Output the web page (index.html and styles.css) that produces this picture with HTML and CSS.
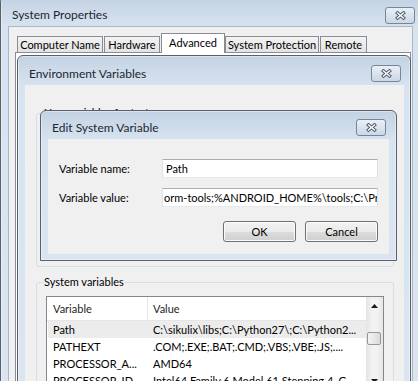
FILE: index.html
```html
<!DOCTYPE html>
<html>
<head>
<meta charset="utf-8">
<link rel="stylesheet" href="styles.css">
</head>
<body>
<div class="desk">
  <div class="win sys">
    <div class="titlebar">
      <span class="title">System Properties</span>
      <span class="close"><svg width="11" height="9" viewBox="0 0 11 9"><path d="M2.5 2 L8.5 7 M8.5 2 L2.5 7" stroke="#4f5b69" stroke-width="3.4" stroke-linecap="square" fill="none"/><path d="M2.5 2 L8.5 7 M8.5 2 L2.5 7" stroke="#ffffff" stroke-width="1.5" stroke-linecap="square" fill="none"/></svg></span>
    </div>
    <div class="client sys-client">
      <div class="tabs">
        <div class="tab tab-cn">Computer Name</div>
        <div class="tab tab-hw">Hardware</div>
        <div class="tab tab-adv active">Advanced</div>
        <div class="tab tab-sp">System Protection</div>
        <div class="tab tab-rm">Remote</div>
      </div>
      <div class="tabpanel"></div>
    </div>
  </div>

  <div class="win env">
    <div class="titlebar">
      <span class="title">Environment Variables</span>
      <span class="close"><svg width="11" height="9" viewBox="0 0 11 9"><path d="M2.5 2 L8.5 7 M8.5 2 L2.5 7" stroke="#4f5b69" stroke-width="3.4" stroke-linecap="square" fill="none"/><path d="M2.5 2 L8.5 7 M8.5 2 L2.5 7" stroke="#ffffff" stroke-width="1.5" stroke-linecap="square" fill="none"/></svg></span>
    </div>
    <div class="client env-client">
      <fieldset class="group user-group">
        <legend>User variables for tester</legend>
      </fieldset>
      <fieldset class="group sys-group">
        <legend>System variables</legend>
        <div class="list">
          <div class="cols">
            <div class="hdr"><div class="c1">Variable</div><div class="c2">Value</div></div>
            <div class="row sel"><div class="c1">Path</div><div class="c2">C:\sikulix\libs;C:\Python27\;C:\Python2...</div></div>
            <div class="row"><div class="c1">PATHEXT</div><div class="c2">.COM;.EXE;.BAT;.CMD;.VBS;.VBE;.JS;....</div></div>
            <div class="row"><div class="c1">PROCESSOR_A...</div><div class="c2">AMD64</div></div>
            <div class="row"><div class="c1">PROCESSOR_ID...</div><div class="c2">Intel64 Family 6 Model 61 Stepping 4, G...</div></div>
          </div>
          <div class="sb">
            <div class="sb-btn"><svg width="7" height="4" viewBox="0 0 7 4"><polygon points="0,4 3.5,0 7,4" fill="#1a1a1a"/></svg></div>
            <div class="sb-track"><div class="thumb"></div></div>
            <div class="sb-btn"><svg width="7" height="4" viewBox="0 0 7 4"><polygon points="0,0 3.5,4 7,0" fill="#1a1a1a"/></svg></div>
          </div>
        </div>
      </fieldset>
    </div>
  </div>

  <div class="win edit">
    <div class="titlebar">
      <span class="title">Edit System Variable</span>
      <span class="close"><svg width="11" height="9" viewBox="0 0 11 9"><path d="M2.5 2 L8.5 7 M8.5 2 L2.5 7" stroke="#4f5b69" stroke-width="3.4" stroke-linecap="square" fill="none"/><path d="M2.5 2 L8.5 7 M8.5 2 L2.5 7" stroke="#ffffff" stroke-width="1.5" stroke-linecap="square" fill="none"/></svg></span>
    </div>
    <div class="client edit-client">
      <div class="field">
        <span class="lbl">Variable name:</span>
        <div class="input"><span class="val">Path</span></div>
      </div>
      <div class="field">
        <span class="lbl">Variable value:</span>
        <div class="input"><span class="val scrolled">orm-tools;%ANDROID_HOME%\tools;C:\Program Files\Java\bin</span></div>
      </div>
      <div class="buttons">
        <div class="btn">OK</div>
        <div class="btn">Cancel</div>
      </div>
    </div>
  </div>
</div>
</body>
</html>
```

FILE: styles.css
```css
* { box-sizing: border-box; }
html, body { margin: 0; padding: 0; }
body {
  width: 418px;
  height: 381px;
  overflow: hidden;
  background: #dae5f1;
  font-family: Lato, "Liberation Sans", sans-serif;
  font-size: 11px;
  color: #000;
}
.desk { position: relative; width: 418px; height: 381px; overflow: hidden; }

/* windows */
.win {
  position: absolute;
  display: flex;
  flex-direction: column;
  border: 1px solid #5a6069;
  border-radius: 6px 6px 0 0;
  background: linear-gradient(#c3d2e3, #d7e3f0 30px, #dae5f1);
  box-shadow: inset 0 0 0 1px rgba(255, 255, 255, 0.4);
}
.titlebar { display: flex; align-items: flex-start; flex: none; }
.title {
  flex: 1;
  font-size: 12px;
  line-height: 16px;
  color: #1d2632;
  white-space: nowrap;
}
.close {
  flex: none;
  width: 30px;
  height: 17px;
  border: 1px solid #75869b;
  border-radius: 3px;
  background: linear-gradient(#e9eff6, #ccd8e6);
  display: flex;
  align-items: center;
  justify-content: center;
}
.client { background: #f0f0f0; }

/* System Properties */
.sys { left: 0; top: -4px; width: 421px; height: 400px; }
.sys .titlebar { height: 29px; padding-left: 11px; }
.sys .title { margin-top: 10px; }
.sys .close { margin-top: 10px; margin-right: 5px; }
.sys-client {
  flex: 1;
  margin: 0 7px 7px 7px;
  border: 1px solid #aab7c6;
  padding-top: 6px;
}
.tabs {
  display: flex;
  align-items: flex-end;
  height: 19px;
  padding-left: 8px;
  position: relative;
  z-index: 1;
}
.tab {
  height: 16px;
  border: 1px solid #898c95;
  border-bottom: 0;
  background: linear-gradient(#f3f3f3, #e3e3e3);
  text-align: center;
  line-height: 15px;
  white-space: nowrap;
  margin-right: 1px;
}
.tab.active {
  height: 20px;
  margin-bottom: -1px;
  background: #fff;
  line-height: 17px;
  margin-right: 0;
}
.tab-cn { width: 86px; }
.tab-hw { width: 56px; }
.tab-adv { width: 64px; }
.tab-sp { width: 94px; }
.tab-rm { width: 47px; }
.tabpanel {
  margin-left: 6px;
  margin-right: 1px;
  height: 400px;
  background: #fff;
  border: 1px solid #898c95;
}

/* Environment Variables */
.env { left: 17px; top: 55px; width: 394px; height: 340px; }
.env .titlebar { height: 29px; padding-left: 11px; }
.env .title { margin-top: 10px; }
.env .close { margin-top: 9px; margin-right: 9px; }
.env-client {
  flex: 1;
  margin: 0 6px 0 7px;
  padding: 20px 10px 0 11px;
}
.group {
  margin: 0;
  padding: 0;
  min-width: 0;
  border: 1px solid #d5dfe5;
  border-radius: 3px;
}
.group legend {
  margin-left: 6px;
  padding: 0 1px;
  line-height: 16px;
  white-space: nowrap;
}
.user-group { height: 162px; }
.sys-group { margin-top: 7px; height: 200px; }

.list {
  margin: 6px 9px 0 9px;
  height: 94px;
  border: 1px solid #828790;
  background: #fff;
  display: flex;
}
.cols { flex: 1; min-width: 0; overflow: hidden; }
.hdr {
  display: flex;
  height: 24px;
  border-bottom: 1px solid #e5e5e5;
  line-height: 23px;
  color: #1e1e1e;
}
.hdr .c1 { width: 101px; flex: none; padding-left: 6px; border-right: 1px solid #e5e5e5; }
.hdr .c2 { padding-left: 5px; }
.row {
  display: flex;
  height: 17px;
  line-height: 17px;
  margin-left: 1px;
  white-space: nowrap;
}
.row.sel { background: #ececec; }
.row .c1 { width: 100px; flex: none; padding-left: 5px; overflow: hidden; }
.row .c2 { padding-left: 5px; overflow: hidden; }
.sb {
  width: 17px;
  flex: none;
  display: flex;
  flex-direction: column;
  background: linear-gradient(to right, #e4e4e4, #f2f2f2 35%, #f2f2f2 65%, #e6e6e6);
}
.sb-btn { height: 17px; flex: none; display: flex; align-items: center; justify-content: center; }
.sb-track { flex: 1; }
.thumb {
  margin: 18px 2px 0 1px;
  height: 13px;
  border: 1px solid #979797;
  border-radius: 2px;
  background: linear-gradient(to right, #f3f3f3, #e8e8e8 50%, #d9d9d9);
}

/* Edit System Variable */
.edit { left: 40px; top: 110px; width: 357px; }
.edit .titlebar { height: 28px; padding-left: 11px; }
.edit .title { margin-top: 9px; }
.edit .close { margin-top: 8px; margin-right: 10px; }
.edit-client {
  margin: 0 7px 6px 7px;
  padding: 20px 11px 12px 11px;
}
.field { display: flex; align-items: center; height: 19px; }
.field + .field { margin-top: 10px; }
.lbl { width: 103px; flex: none; white-space: nowrap; }
.input {
  flex: 1;
  min-width: 0;
  height: 19px;
  border: 1px solid;
  border-color: #abadb3 #dbdfe6 #e3e9ef #e2e3ea;
  background: #fff;
  padding-left: 3px;
  line-height: 17px;
  overflow: hidden;
  white-space: nowrap;
}
.val.scrolled { display: inline-block; margin-left: -2px; }
.buttons { display: flex; justify-content: flex-end; gap: 9px; margin-top: 14px; }
.btn {
  width: 73px;
  height: 21px;
  border: 1px solid #707070;
  border-radius: 3px;
  background: linear-gradient(#f2f2f2 0%, #ebebeb 50%, #dddddd 50%, #cfcfcf 100%);
  box-shadow: inset 0 0 0 1px #fbfbfb;
  text-align: center;
  line-height: 19px;
}
```
